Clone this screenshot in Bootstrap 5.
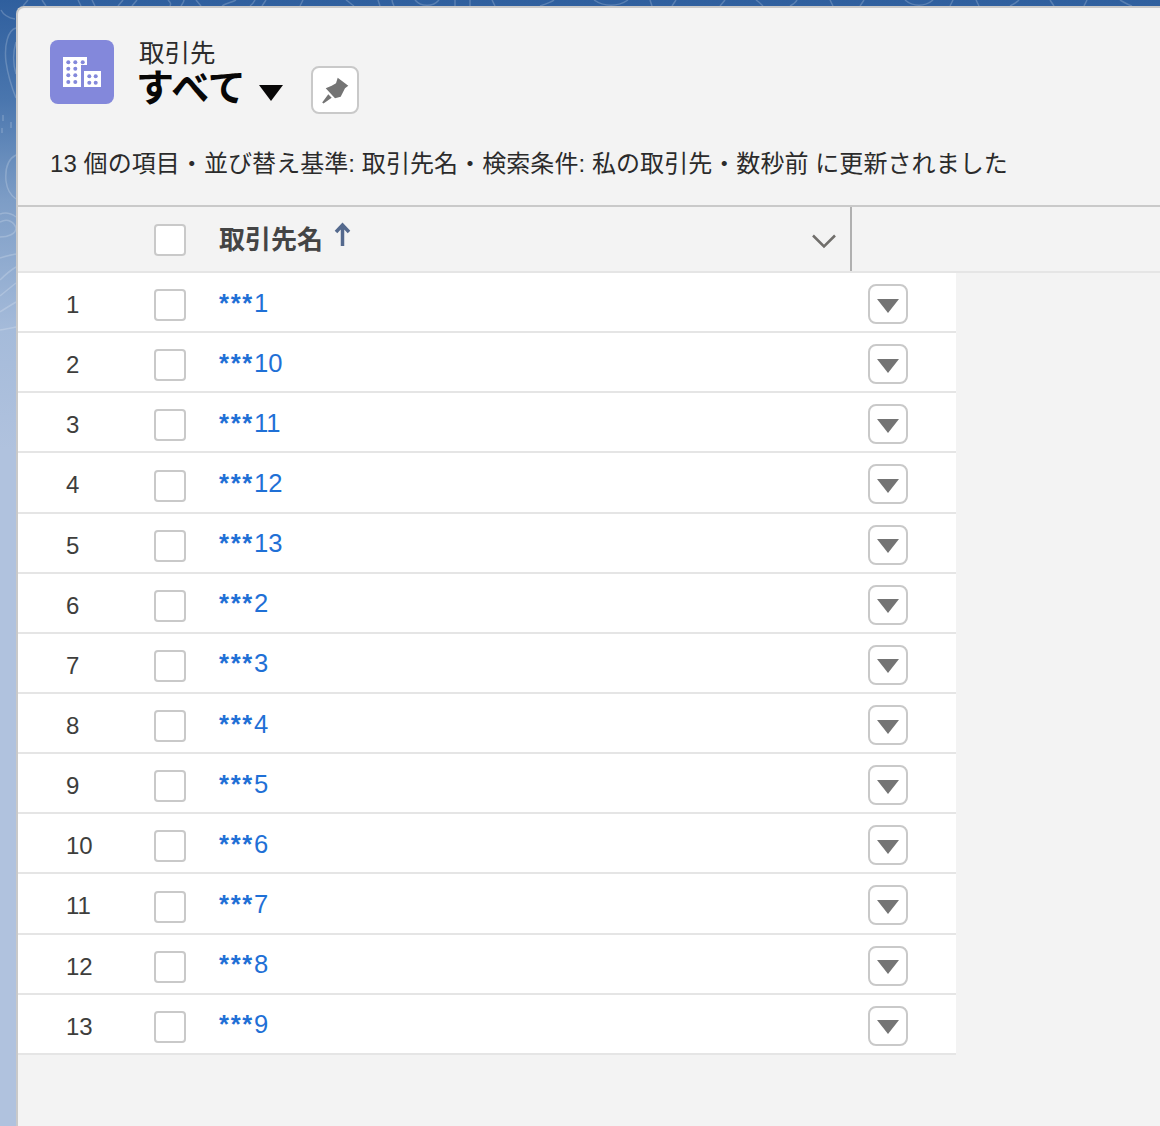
<!doctype html>
<html lang="ja">
<head>
<meta charset="utf-8">
<title>取引先</title>
<link href="https://cdn.jsdelivr.net/npm/bootstrap@5.3.0/dist/css/bootstrap.min.css" rel="stylesheet">
<style>
html,body{height:100%;margin:0;overflow:hidden}
body{font-family:"Liberation Sans","Noto Sans CJK JP",sans-serif;color:#3e3e3c;background:linear-gradient(180deg,#2f5f9e 0,#4a76ae 100px,#7d9dc6 200px,#a5bbda 330px,#b0c2de 450px,#b0c2de 100%);position:relative;height:1126px}
.topo{position:absolute;left:0;top:0;width:1160px;height:1126px}
.shell{position:relative;height:1126px;padding:6px 0 0 16px}
.panel{height:100%;background:#f3f3f3;border-left:2px solid #c9c9c9;border-top:2px solid #c9c9c9;border-top-left-radius:8px;overflow:hidden}
.headbox{height:197px;padding:32px 0 0 32px}
.objicon{width:64px;height:64px;border-radius:8px;background:#8388db}
.titles{margin-left:25px;margin-top:-2px}
.objname{font-size:25.5px;line-height:30px;color:#2b2b2b}
.viewname{font-size:38px;line-height:38px;font-weight:700;color:#080707;margin-top:1px;margin-left:-3px}
.caretbig{width:24px;height:16px;margin-left:13px;margin-top:10px}
.pinbtn{width:48px;height:48px;border:2px solid #c9c9c9;border-radius:8px;background:#fff;margin-left:28px;margin-top:26px}
.metaline{font-size:24px;line-height:32px;color:#2b2b2b;margin-top:34px;letter-spacing:.07px}
.headrow{height:68px;border-top:2px solid #c9c9c9;border-bottom:2px solid #e5e5e5}
.cellnum{width:136px;padding-left:48px;font-size:24px}
.cellcheck{width:32px;height:32px;border:2px solid #c9c9c9;border-radius:4px;background:#fff;flex:none;margin-top:2px}
.datarow .cellcheck{margin-top:6.200px}
.colname{width:666px;padding-left:33px;padding-right:13px;border-right:2px solid #b0b0b0;align-self:stretch}
.colname b{font-size:26px;color:#444;margin-top:2px}
.updown{width:17px;height:24px;margin-left:11px;margin-top:-10px}
.chev{width:26px;height:16px;margin-top:4px}
.datarow{width:938px;height:60.15px;background:#fff;border-bottom:2px solid #e5e5e5}
.rowname{width:682px;padding-left:33px;font-size:25.6px;line-height:30px;margin-top:1px}
.rowname a{color:#1f70d6;text-decoration:none}
.stars{letter-spacing:1.7px;font-weight:700}
.rowact{width:40px;height:40px;border:2px solid #c9c9c9;border-radius:8px;background:#fff;margin-top:4px}
.tri{width:22px;height:14px;margin-top:3px}
.cellnum.pull{margin-top:5.800px}
</style>
</head>
<body>
<svg class="topo" viewBox="0 0 1160 1126" fill="none" stroke="#fff" stroke-opacity=".2" stroke-width="1.500" aria-hidden="true">
<path d="M16 28C8 30 4 45 6 62c2 14 6 26 10 36M16 42c-3 10-3 22 0 32M1 10c3 6 8 8 14 9M3 115v6M2 128v5M11 122v6M16 155c-8 4-11 14-10 26 1 8 4 14 10 18M0 214c6-2 12 0 16 3M0 222c8-4 14 0 16 6 0 6-8 9-16 9M0 258c6-2 11-3 16-4M0 280c6-6 11-10 16-13M0 296c6-5 11-9 16-13M0 312c6-4 11-7 16-10M0 330c6-1 11-2 16-3"/>
<path d="M28 0l-5 6M42 0l4 6M78 0l3 6M92 0l3 6M118 6l5-6M132 6l5-6M168 0c3 3 3 4 2 6M181 6c2-3 3-4 3-6M196 0l5 6M222 6c5-3 8-3 14-6M250 6c3-2 4-4 5-6M262 6l4-6M300 6l3-6M346 0c3 2 5 4 8 6M378 0l2 6M392 0c0 2 1 4 2 6M415 0c6 7 18 7 24 0M455 0v6M470 0v6M495 6l-3-6M540 6c6-2 12-4 14-6M594 0c10 7 24 7 34 0M650 0l2 6M672 6l4-6M720 6l5-6M756 0c3 2 5 4 7 6M790 6c4-2 6-4 7-6M830 0l3 6M860 6l4-6M905 0c8 7 20 7 28 0M950 6l3-6M976 0l3 6M1010 6c4-2 7-4 9-6M1050 0l4 6M1084 6l3-6M1120 0c5 3 9 5 12 6"/>
</svg>
<div class="shell">
<main class="panel">
<section class="headbox">
<div class="d-flex align-items-start">
<div class="objicon d-flex align-items-center justify-content-center">
<svg width="64" height="64" viewBox="0 0 64 64"><path fill="#fff" d="M13 17h24v8h-6v22H13zM34 31h17v16H34z"/><g fill="#8388db"><circle cx="18.300" cy="22.300" r="2"/><circle cx="25.300" cy="22.300" r="2"/><circle cx="32.700" cy="22.300" r="2"/><circle cx="18.300" cy="28.700" r="2"/><circle cx="25.300" cy="28.700" r="2"/><circle cx="18.300" cy="35.300" r="2"/><circle cx="25.300" cy="35.300" r="2"/><circle cx="18.300" cy="42" r="2"/><circle cx="25.300" cy="42" r="2"/><circle cx="39.300" cy="36.300" r="2"/><circle cx="45.700" cy="36.300" r="2"/><circle cx="39.300" cy="42.700" r="2"/><circle cx="45.700" cy="42.700" r="2"/></g></svg>
</div>
<div class="titles">
<div class="objname">取引先</div>
<div class="d-flex align-items-center">
<div class="viewname">すべて</div>
<svg class="caretbig" viewBox="0 0 24 16"><path fill="#080707" d="M0 0h24L12 16z"/></svg>
</div>
</div>
<button class="pinbtn d-flex align-items-center justify-content-center p-0" type="button" aria-label="ピン留め">
<svg width="28" height="28" viewBox="0 0 28 28"><path fill="#747474" d="M16.700 1.700L27.300 9.700 24 12.300 19.700 20.700 14 22.300 4.700 12.300 10.700 9.700 15 7.300zM7.300 18.300L10.700 21.700 2.500 27.500 1.200 26.500z"/></svg>
</button>
</div>
<div class="metaline">13 個の項目・並び替え基準: 取引先名・検索条件: 私の取引先・数秒前 に更新されました</div>
</section>
<div class="headrow d-flex align-items-center">
<div class="cellnum"></div>
<div class="cellcheck"></div>
<div class="colname d-flex align-items-center justify-content-between">
<div class="d-flex align-items-center"><b>取引先名</b><svg class="updown" viewBox="0 0 17 24"><path fill="none" stroke="#54698d" stroke-width="3.500" d="M8.500 24V3M2 10L8.500 3 15 10"/></svg></div>
<svg class="chev" viewBox="0 0 26 16"><path fill="none" stroke="#706e6b" stroke-width="2.500" d="M2 2.500l11 11 11-11"/></svg>
</div>
</div>
<div class="datarow d-flex align-items-center"><div class="cellnum pull">1</div><div class="cellcheck"></div><div class="rowname"><a href="#"><span class="stars">***</span>1</a></div><div class="rowact d-flex align-items-center justify-content-center"><svg class="tri" viewBox="0 0 22 14"><path fill="#747474" d="M0 0h22L11 14z"/></svg></div></div>
<div class="datarow d-flex align-items-center"><div class="cellnum pull">2</div><div class="cellcheck"></div><div class="rowname"><a href="#"><span class="stars">***</span>10</a></div><div class="rowact d-flex align-items-center justify-content-center"><svg class="tri" viewBox="0 0 22 14"><path fill="#747474" d="M0 0h22L11 14z"/></svg></div></div>
<div class="datarow d-flex align-items-center"><div class="cellnum pull">3</div><div class="cellcheck"></div><div class="rowname"><a href="#"><span class="stars">***</span>11</a></div><div class="rowact d-flex align-items-center justify-content-center"><svg class="tri" viewBox="0 0 22 14"><path fill="#747474" d="M0 0h22L11 14z"/></svg></div></div>
<div class="datarow d-flex align-items-center"><div class="cellnum pull">4</div><div class="cellcheck"></div><div class="rowname"><a href="#"><span class="stars">***</span>12</a></div><div class="rowact d-flex align-items-center justify-content-center"><svg class="tri" viewBox="0 0 22 14"><path fill="#747474" d="M0 0h22L11 14z"/></svg></div></div>
<div class="datarow d-flex align-items-center"><div class="cellnum pull">5</div><div class="cellcheck"></div><div class="rowname"><a href="#"><span class="stars">***</span>13</a></div><div class="rowact d-flex align-items-center justify-content-center"><svg class="tri" viewBox="0 0 22 14"><path fill="#747474" d="M0 0h22L11 14z"/></svg></div></div>
<div class="datarow d-flex align-items-center"><div class="cellnum pull">6</div><div class="cellcheck"></div><div class="rowname"><a href="#"><span class="stars">***</span>2</a></div><div class="rowact d-flex align-items-center justify-content-center"><svg class="tri" viewBox="0 0 22 14"><path fill="#747474" d="M0 0h22L11 14z"/></svg></div></div>
<div class="datarow d-flex align-items-center"><div class="cellnum pull">7</div><div class="cellcheck"></div><div class="rowname"><a href="#"><span class="stars">***</span>3</a></div><div class="rowact d-flex align-items-center justify-content-center"><svg class="tri" viewBox="0 0 22 14"><path fill="#747474" d="M0 0h22L11 14z"/></svg></div></div>
<div class="datarow d-flex align-items-center"><div class="cellnum pull">8</div><div class="cellcheck"></div><div class="rowname"><a href="#"><span class="stars">***</span>4</a></div><div class="rowact d-flex align-items-center justify-content-center"><svg class="tri" viewBox="0 0 22 14"><path fill="#747474" d="M0 0h22L11 14z"/></svg></div></div>
<div class="datarow d-flex align-items-center"><div class="cellnum pull">9</div><div class="cellcheck"></div><div class="rowname"><a href="#"><span class="stars">***</span>5</a></div><div class="rowact d-flex align-items-center justify-content-center"><svg class="tri" viewBox="0 0 22 14"><path fill="#747474" d="M0 0h22L11 14z"/></svg></div></div>
<div class="datarow d-flex align-items-center"><div class="cellnum pull">10</div><div class="cellcheck"></div><div class="rowname"><a href="#"><span class="stars">***</span>6</a></div><div class="rowact d-flex align-items-center justify-content-center"><svg class="tri" viewBox="0 0 22 14"><path fill="#747474" d="M0 0h22L11 14z"/></svg></div></div>
<div class="datarow d-flex align-items-center"><div class="cellnum pull">11</div><div class="cellcheck"></div><div class="rowname"><a href="#"><span class="stars">***</span>7</a></div><div class="rowact d-flex align-items-center justify-content-center"><svg class="tri" viewBox="0 0 22 14"><path fill="#747474" d="M0 0h22L11 14z"/></svg></div></div>
<div class="datarow d-flex align-items-center"><div class="cellnum pull">12</div><div class="cellcheck"></div><div class="rowname"><a href="#"><span class="stars">***</span>8</a></div><div class="rowact d-flex align-items-center justify-content-center"><svg class="tri" viewBox="0 0 22 14"><path fill="#747474" d="M0 0h22L11 14z"/></svg></div></div>
<div class="datarow d-flex align-items-center"><div class="cellnum pull">13</div><div class="cellcheck"></div><div class="rowname"><a href="#"><span class="stars">***</span>9</a></div><div class="rowact d-flex align-items-center justify-content-center"><svg class="tri" viewBox="0 0 22 14"><path fill="#747474" d="M0 0h22L11 14z"/></svg></div></div>
</main>
</div>
<script src="https://cdn.jsdelivr.net/npm/bootstrap@5.3.0/dist/js/bootstrap.bundle.min.js"></script>
</body>
</html>
